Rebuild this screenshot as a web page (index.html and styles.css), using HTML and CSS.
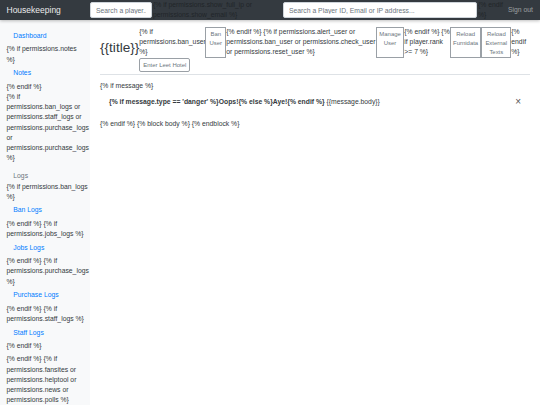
FILE: index.html
```html
<!DOCTYPE html>
<html lang="en">
<head>
    <meta charset="UTF-8">
    <title>Housekeeping</title>
    <link rel="stylesheet" href="styles.css">
</head>
<body>
    <nav class="topbar">
        <a class="brand">Housekeeping</a>
        <input class="search search-player" placeholder="Search a player..">
        <span class="stray stray-left">{% if permissions.show_full_ip or permissions.show_email %}</span>
        <input class="search search-wide" placeholder="Search a Player ID, Email or IP address...">
        <span class="stray stray-right">{% endif %}</span>
        <a class="signout">Sign out</a>
    </nav>

    <div class="layout">
        <aside class="sidebar">
            <a class="side-link">Dashboard</a>
            <p>{% if permissions.notes<br>%}</p>
            <a class="side-link">Notes</a>
            <p>{% endif %}</p>
            <p>{% if<br>permissions.ban_logs or permissions.staff_logs or permissions.purchase_logs or permissions.purchase_logs %}</p>
            <h6 class="side-heading">Logs</h6>
            <p>{% if permissions.ban_logs %}</p>
            <a class="side-link">Ban Logs</a>
            <p>{% endif %} {% if permissions.jobs_logs %}</p>
            <a class="side-link">Jobs Logs</a>
            <p>{% endif %} {% if permissions.purchase_logs %}</p>
            <a class="side-link">Purchase Logs</a>
            <p>{% endif %} {% if permissions.staff_logs %}</p>
            <a class="side-link">Staff Logs</a>
            <p>{% endif %}</p>
            <p class="gap">{% endif %} {% if permissions.fansites or permissions.helptool or permissions.news or permissions.polls %}</p>
        </aside>

        <main class="content">
            <header class="page-head">
                <h1>{{title}}</h1>
                <div class="ban-col">
                    <span>{% if permissions.ban_user %}</span>
                    <a class="btn btn-leet">Enter Leet Hotel</a>
                </div>
                <a class="btn btn-ban">Ban User</a>
                <span class="txt txt-alert">{% endif %} {% if permissions.alert_user or permissions.ban_user or permissions.check_user or permissions.reset_user %}</span>
                <a class="btn btn-manage">Manage User</a>
                <span class="txt txt-rank">{% endif %} {% if player.rank &gt;= 7 %}</span>
                <a class="btn btn-furni">Reload Furnidata</a>
                <a class="btn btn-texts">Reload External Texts</a>
                <span class="txt txt-end">{% endif %}</span>
            </header>

            <p class="line">{% if message %}</p>
            <div class="alert">
                <p><strong>{% if message.type == 'danger' %}Oops!{% else %}Aye!{% endif %}</strong> {{message.body}}</p>
                <span class="close">&times;</span>
            </div>
            <p class="line line-end">{% endif %} {% block body %} {% endblock %}</p>
        </main>
    </div>
</body>
</html>
```

FILE: styles.css
```css
html{
    box-sizing: border-box;
    font-family: "Liberation Sans", Arial, sans-serif;
    font-size: 6.8px;
    line-height: 10.2px;
    color: #343a40;
}

*,
*::after,
*::before{
    box-sizing: border-box;
}

body{
    margin: 0;
    height: 405px;
    overflow: hidden;
    background: #fff;
}

p{
    margin: 0;
}

/* top bar */
.topbar{
    display: flex;
    align-items: center;
    height: 20px;
    background: #343a40;
    box-shadow: 0 1px 3px rgba(0,0,0,.25);
    position: relative;
}
.brand{
    width: 90px;
    padding-left: 6.5px;
    font-size: 8.5px;
    color: #fff;
    opacity: .9;
}
.search{
    height: 16px;
    padding: 0 5px;
    border: 1px solid #ced4da;
    border-radius: 2px;
    background: #fff;
    font-family: inherit;
    font-size: 6.8px;
}
.search::placeholder{
    color: #6c757d;
    opacity: 1;
}
.search-player{
    width: 62px;
}
.search-wide{
    width: 194px;
}
.stray{
    color: #212529;
}
.stray-left{
    width: 131px;
    padding-left: 1px;
}
.stray-right{
    width: 31px;
    padding-left: 1px;
}
.signout{
    color: rgba(255,255,255,.5);
}

/* sidebar */
.layout{
    display: flex;
}
.sidebar{
    flex: 0 0 90px;
    min-width: 0;
    height: 385px;
    padding: 7.5px 0 0 6.5px;
    background: #f8f9fa;
}
.side-link{
    display: block;
    padding: 3.4px 0 3.4px 6.8px;
    color: #007bff;
}
.side-heading{
    margin: 7.8px 0 0;
    padding-left: 6.8px;
    font-size: 6.8px;
    font-weight: 400;
    line-height: 10.2px;
    color: #6c757d;
}
.gap{
    margin-top: 3px;
}

/* main column */
.content{
    flex: 1;
    min-width: 0;
    padding: 7px 10px 0;
}
.page-head{
    display: flex;
    align-items: flex-start;
    height: 48px;
    border-bottom: 1px solid #dee2e6;
}
h1{
    flex: 0 0 39px;
    margin: 12.5px 0 0;
    font-size: 13.6px;
    font-weight: 400;
    line-height: 16px;
    white-space: nowrap;
}
.ban-col{
    flex: 0 0 66px;
    min-width: 0;
}
.ban-col span{
    display: block;
}
.btn{
    display: block;
    padding: 1.7px;
    border: 1px solid #9aa0a6;
    background: #fff;
    color: #6c757d;
    font-size: 5.95px;
    line-height: 8.9px;
    text-align: center;
}
.btn-leet{
    width: 51px;
    height: 14px;
    padding-top: 2.5px;
    border-radius: 2px;
    white-space: nowrap;
}
.btn-ban{
    flex: 0 0 21px;
    height: 31px;
}
.btn-manage{
    flex: 0 0 28.5px;
    height: 31px;
}
.btn-furni{
    flex: 0 0 31.4px;
    height: 31px;
}
.btn-texts{
    flex: 0 0 30px;
    height: 31px;
}
.txt-alert{
    flex: 0 0 149.5px;
}
.txt-rank{
    flex: 0 0 45.6px;
}
.txt-end{
    flex: 0 0 19px;
}

.line{
    margin-top: 6px;
}
.alert{
    display: flex;
    justify-content: space-between;
    align-items: center;
    margin-top: 1px;
    padding: 5px 9px;
}
.close{
    font-size: 10px;
    color: #555;
}
.line-end{
    margin-top: 7px;
}
```
